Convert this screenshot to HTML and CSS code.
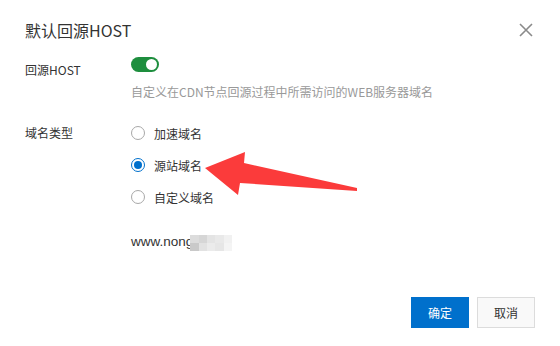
FILE: index.html
```html
<!DOCTYPE html>
<html lang="zh">
<head>
<meta charset="utf-8">
<link rel="stylesheet" href="styles.css">
</head>
<body>
<div class="dialog">
  <div class="header">
    <div class="title">默认回源HOST</div>
    <svg class="close" width="14" height="14" viewBox="0 0 14 14"><path d="M1 1L13 13M13 1L1 13" stroke="#8a8a8a" stroke-width="1.6" fill="none"/></svg>
  </div>
  <div class="form">
    <div class="label l1">回源HOST</div>
    <div class="field">
      <div class="switch"><span class="knob"></span></div>
      <div class="desc">自定义在CDN节点回源过程中所需访问的WEB服务器域名</div>
    </div>
    <div class="label l2">域名类型</div>
    <div class="field radios">
      <div class="opt"><span class="radio"></span><span>加速域名</span></div>
      <div class="opt"><span class="radio on"></span><span>源站域名</span></div>
      <div class="opt"><span class="radio"></span><span>自定义域名</span></div>
      <div class="domain">www.nong<span class="mosaic"><i class="c1"></i><i class="c2"></i><i class="c3"></i><i class="c4"></i><i class="c5"></i><i class="c6"></i><i class="c7"></i><i class="c8"></i><i class="c9"></i><i class="c10"></i></span></div>
    </div>
  </div>
  <div class="footer">
    <button class="btn primary">确定</button>
    <button class="btn">取消</button>
  </div>
  <svg class="arrow" width="560" height="346" viewBox="0 0 560 346"><polygon points="205,168 245,152 244,163 357,188 357,191 240,183 238,195" fill="#fb3b3b"/></svg>
</div>
</body>
</html>
```
FILE: styles.css
```css
html, body { margin: 0; padding: 0; background: #fff; }
body { font-family: "Noto Sans CJK SC", "Liberation Sans", sans-serif; color: #333; }
.dialog { position: relative; width: 560px; height: 346px; display: flex; flex-direction: column; box-sizing: border-box; }
.header { display: flex; justify-content: space-between; align-items: center; padding: 19px 27px 0 25px; height: 22px; }
.title { font-size: 16px; line-height: 22px; color: #333; }
.close { display: block; }
.form { display: grid; grid-template-columns: 106px 1fr; padding: 16px 25px 0; font-size: 12px; }
.label { color: #333; line-height: 16px; }
.l1 { padding-top: 5px; }
.l2 { line-height: 32px; margin-top: 17px; }
.switch { width: 28px; height: 15px; border-radius: 8px; background: #1e8e3e; position: relative; }
.knob { position: absolute; right: 2px; top: 2px; width: 11px; height: 11px; border-radius: 50%; background: #fff; }
.desc { margin-top: 12px; line-height: 16px; color: #999; }
.radios { margin-top: 17px; }
.opt { display: flex; align-items: center; height: 32px; color: #333; }
.radio { width: 12px; height: 12px; border: 1px solid #a8a8a8; border-radius: 50%; margin-right: 9px; box-sizing: content-box; position: relative; }
.radio.on { border-color: #0070cc; }
.radio.on::after { content: ""; position: absolute; left: 2px; top: 2px; width: 8px; height: 8px; border-radius: 50%; background: #0070cc; }
.domain { margin-top: 20px; font-family: "Liberation Sans", sans-serif; font-size: 13.5px; line-height: 16px; color: #333; display: flex; align-items: center; }
.mosaic { display: inline-grid; grid-template-columns: repeat(5, 8.4px); grid-template-rows: 8px 8px; margin-left: -3px; margin-top: 2px; }
.mosaic i { display: block; }
.c1 { background: #dcdcdc; } .c2 { background: #d6d6d6; } .c3 { background: #e4e4e4; } .c4 { background: #e9e9e9; } .c5 { background: #f1f1f1; }
.c6 { background: #c9c9c9; } .c7 { background: #e2e2e2; } .c8 { background: #ebebeb; } .c9 { background: #e6e6e6; } .c10 { background: #f4f4f4; }
.footer { margin-top: auto; display: flex; justify-content: flex-end; gap: 8px; padding: 0 25px 18px; }
.btn { width: 58px; height: 31px; font-family: inherit; font-size: 12px; border: 1px solid #dcdcdc; background: #f9f9f9; color: #333; padding: 0; }
.btn.primary { background: #0070cc; border-color: #0070cc; color: #fff; }
.arrow { position: absolute; left: 0; top: 0; pointer-events: none; }
```
